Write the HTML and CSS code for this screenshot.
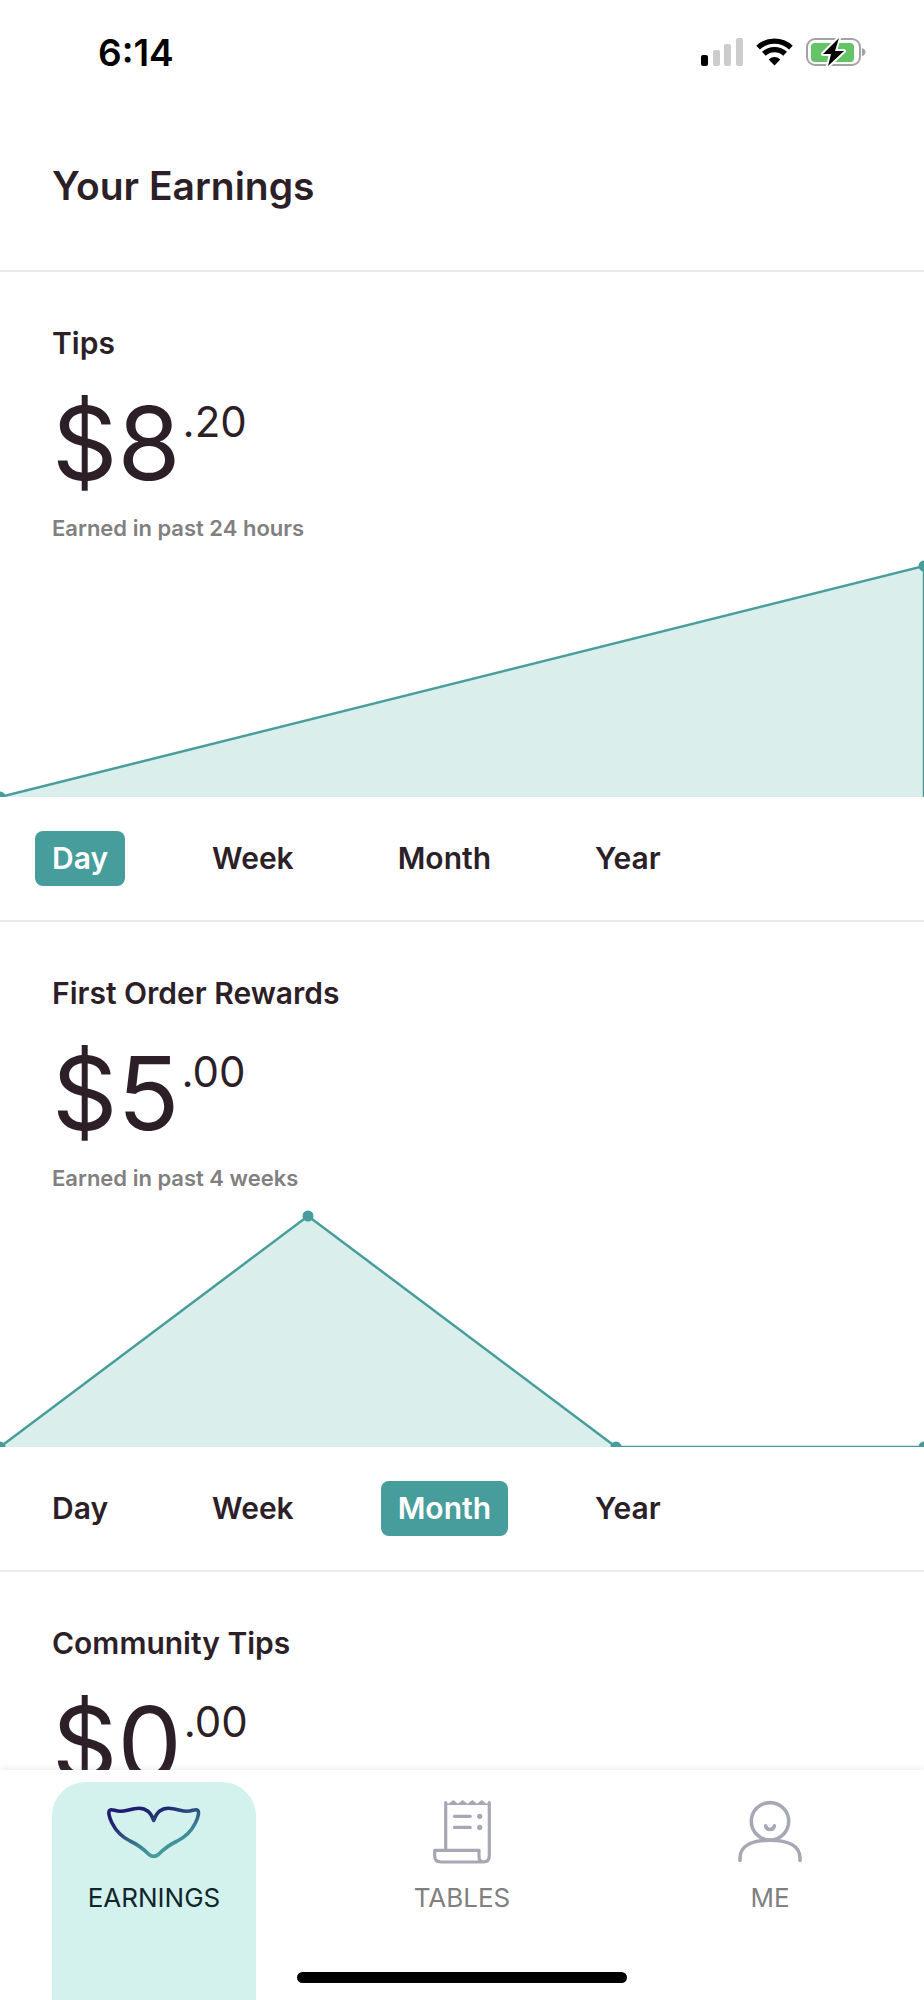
FILE: index.html
```html
<!DOCTYPE html>
<html lang="en">
<head>
  <meta charset="UTF-8">
  <meta name="viewport" content="width=device-width, initial-scale=1.0">
  <title>Your Earnings</title>
  <link rel="stylesheet" href="styles.css">
</head>
<body>
  <div class="status-bar">
    <span class="time">6:14</span>
    <div class="status-icons">
      <svg width="42" height="28" viewBox="0 0 42 28">
        <rect x="0" y="17" width="7" height="11" rx="2" fill="#000"/>
        <rect x="12" y="12" width="7" height="16" rx="2" fill="#ccc"/>
        <rect x="23" y="6" width="7" height="22" rx="2" fill="#ccc"/>
        <rect x="35" y="0" width="7" height="28" rx="2" fill="#ccc"/>
      </svg>
      <svg width="37" height="28" viewBox="0 0 37 28">
        <path d="M2.1 9.6A24 24 0 0 1 34.9 9.6M7.9 15.8A15.5 15.5 0 0 1 29.1 15.8" fill="none" stroke="#000" stroke-width="5.4"/>
        <path d="M18.5 27.6L12.7 21.4Q18.5 16.8 24.3 21.4Z" fill="#000"/>
      </svg>
      <svg width="60" height="32" viewBox="0 0 60 32">
        <rect x="1" y="3" width="53" height="26" rx="8" fill="none" stroke="#a3a3a3" stroke-width="2"/>
        <path d="M56 12Q59.5 13 59.5 16T56 20Z" fill="#a3a3a3"/>
        <rect x="5" y="7" width="43" height="19" rx="4" fill="#65c466"/>
        <path d="M33 2L17 18H25L22 30L38 15H29Z" fill="#000" stroke="#fff" stroke-width="4" paint-order="stroke" stroke-linejoin="round"/>
      </svg>
    </div>
  </div>

  <header class="header">
    <h1>Your Earnings</h1>
  </header>

  <main class="content">
    <section class="card">
      <div class="summary">
        <h2>Tips</h2>
        <p class="amount">$8<span class="cents">.20</span></p>
        <p class="caption">Earned in past 24 hours</p>
      </div>
      <svg class="chart" viewBox="0 0 924 240">
        <polygon class="area" points="0,240 924,9 924,240"/>
        <polyline class="line" points="0,240 924,9 924,240"/>
        <circle class="dot" cx="0" cy="240" r="5.5"/>
        <circle class="dot" cx="924" cy="9" r="5.5"/>
      </svg>
      <div class="periods">
        <button class="period active">Day</button>
        <button class="period">Week</button>
        <button class="period">Month</button>
        <button class="period">Year</button>
      </div>
    </section>

    <section class="card">
      <div class="summary">
        <h2>First Order Rewards</h2>
        <p class="amount">$5<span class="cents">.00</span></p>
        <p class="caption">Earned in past 4 weeks</p>
      </div>
      <svg class="chart" viewBox="0 0 924 240">
        <polygon class="area" points="0,240 308,9 616,240"/>
        <polyline class="line" points="0,240 308,9 616,240 924,240"/>
        <circle class="dot" cx="0" cy="240" r="5.5"/>
        <circle class="dot" cx="308" cy="9" r="5.5"/>
        <circle class="dot" cx="616" cy="240" r="5.5"/>
        <circle class="dot" cx="924" cy="240" r="5.5"/>
      </svg>
      <div class="periods">
        <button class="period">Day</button>
        <button class="period">Week</button>
        <button class="period active">Month</button>
        <button class="period">Year</button>
      </div>
    </section>

    <section class="card">
      <div class="summary">
        <h2>Community Tips</h2>
        <p class="amount">$0<span class="cents">.00</span></p>
      </div>
    </section>
  </main>

  <nav class="tab-bar">
    <a href="#" class="tab active">
      <svg width="96" height="66" viewBox="0 0 96 66" fill="none">
        <defs>
          <linearGradient id="tail" x1="30" y1="8" x2="48" y2="58" gradientUnits="userSpaceOnUse">
            <stop offset="0" stop-color="#211b72"/>
            <stop offset="0.2" stop-color="#21266f"/>
            <stop offset="0.75" stop-color="#3d8797"/>
            <stop offset="1" stop-color="#479d9b"/>
          </linearGradient>
        </defs>
        <path d="M47.7 21.5C45 13.5 40 9.3 33 9.3C26 9.3 20 12.3 14.5 12.3C9.5 12.3 7 10.3 4.5 10.9C1.5 11.8 3 18 6 24C10 32 17 38.5 24 42C34 46.5 38 50.5 43 55.5Q47.7 59.2 52.4 55.5C57.4 50.5 61.4 46.5 71.4 42C78.4 38.5 85.4 32 89.4 24C92.4 18 93.9 11.8 90.9 10.9C88.4 10.3 85.9 12.3 80.9 12.3C75.4 12.3 69.4 9.3 62.4 9.3C55.4 9.3 50.4 13.5 47.7 21.5Z" stroke="url(#tail)" stroke-width="3.6" stroke-linejoin="round"/>
      </svg>
      EARNINGS
    </a>
    <a href="#" class="tab">
      <svg width="64" height="66" viewBox="0 0 64 66" fill="none" stroke="#a6a9b5" stroke-width="3.2" stroke-linecap="round" stroke-linejoin="round">
        <path d="M15.7 51V3.5M59.3 3.5V57Q59.3 63 53 63H11Q4.7 63 4.7 57V51.3H49V58Q49 63 54 63"/>
        <path d="M15 6V3L18.5 4.8L23.3 1L28 4.8L32.7 1L37.5 4.8L42.3 1L47 4.8L51.7 1L56.5 4.8L60 3V6Z" fill="#a6a9b5" stroke="none"/>
        <path d="M24.5 17.3H40.2M24.5 28.4H40.2"/>
        <circle cx="49.7" cy="17.3" r="2.6" fill="#a6a9b5" stroke="none"/>
        <circle cx="49.7" cy="28.4" r="2.6" fill="#a6a9b5" stroke="none"/>
      </svg>
      TABLES
    </a>
    <a href="#" class="tab">
      <svg width="64" height="66" viewBox="0 0 64 66" fill="none" stroke="#a6a9b5" stroke-width="3.6" stroke-linecap="round">
        <circle cx="32" cy="22.3" r="18.7"/>
        <path d="M2 61.5V59C2 47.5 13 41.3 32 41.3S62 47.5 62 59V61.5"/>
        <path d="M27.7 26.8C28.2 31.8 35.8 31.8 36.3 26.8"/>
      </svg>
      ME
    </a>
    <span class="home-indicator"></span>
  </nav>
</body>
</html>
```

FILE: styles.css
```css
* {
  box-sizing: border-box;
}
body {
  font-family: Inter, sans-serif;
  color: #2d1f28;
  background-color: #fff;
  margin: 0;
  height: 100vh;
  display: flex;
  flex-direction: column;
}
h1, h2, p {
  margin: 0;
}
.status-bar {
  display: flex;
  flex-shrink: 0;
  align-items: center;
  justify-content: space-between;
  height: 104px;
  padding: 0 58px 0 98px;
}
.time {
  color: #000;
  font-size: 37px;
  font-weight: 600;
}
.status-icons {
  display: flex;
  align-items: center;
  gap: 13px;
}
.header {
  flex-shrink: 0;
  padding: 58px 52px 60px;
  border-bottom: 2px solid #e8e8ee;
}
.header h1 {
  font-size: 39px;
  font-weight: 600;
  line-height: 48px;
}
.content {
  flex: 1;
  min-height: 0;
  overflow-y: auto;
  scrollbar-width: none;
}
.card {
  border-bottom: 2px solid #e8e8ee;
}
.summary {
  padding: 53px 52px 16px;
}
.summary h2 {
  font-size: 30px;
  font-weight: 600;
  line-height: 36px;
}
.amount {
  display: flex;
  align-items: flex-start;
  gap: 2px;
  margin: 30px 0 20px;
  font-size: 102px;
  line-height: 104px;
}
.cents {
  font-size: 42px;
  line-height: 62px;
}
.caption {
  color: #808080;
  font-size: 22px;
  font-weight: 600;
  line-height: 26px;
}
.chart {
  display: block;
  width: 100%;
}
.area {
  fill: #daeeeb;
}
.line {
  fill: none;
  stroke: #479d9b;
  stroke-width: 2.5;
}
.dot {
  fill: #479d9b;
}
.periods {
  display: flex;
  gap: 70px;
  padding: 34px 35px;
}
.period {
  background: none;
  color: #2d1f28;
  border: none;
  border-radius: 8px;
  padding: 0 17px;
  font-family: inherit;
  font-size: 30px;
  font-weight: 600;
  line-height: 55px;
  cursor: pointer;
}
.period.active {
  background-color: #479d9b;
  color: #fff;
}
.tab-bar {
  position: relative;
  display: grid;
  grid-template-columns: repeat(3, 1fr);
  flex-shrink: 0;
  padding-top: 12px;
  background-color: #fff;
  box-shadow: 0 0 8px rgba(100, 110, 140, 0.2);
}
.tab {
  display: flex;
  flex-direction: column;
  align-items: center;
  gap: 17px;
  margin: 0 52px;
  padding: 17px 0 86px;
  border-radius: 34px 34px 0 0;
  color: #808080;
  font-size: 26px;
  line-height: 32px;
  text-decoration: none;
}
.tab.active {
  background-color: #d3f1ed;
  color: #12262b;
}
.home-indicator {
  position: absolute;
  bottom: 17px;
  left: 50%;
  width: 330px;
  height: 11px;
  margin-left: -165px;
  border-radius: 6px;
  background-color: #000;
}
```
